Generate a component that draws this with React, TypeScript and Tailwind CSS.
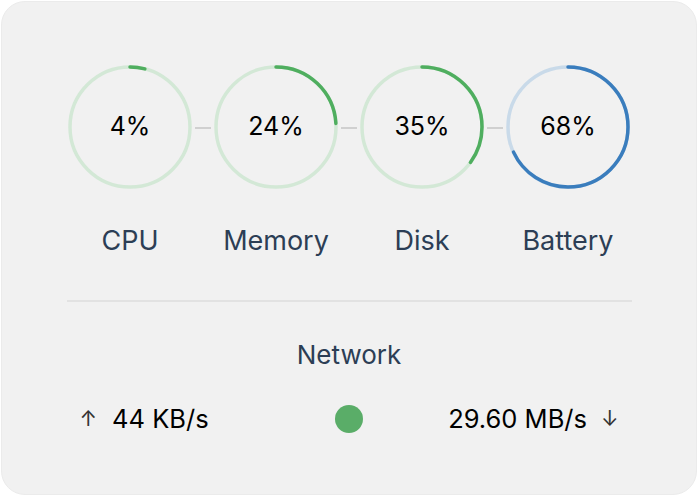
import React from "react";

type Gauge = { label: string; value: number; color: string; track: string };

const gauges: Gauge[] = [
  { label: "CPU", value: 4, color: "#4fae5f", track: "#d3e8d6" },
  { label: "Memory", value: 24, color: "#4fae5f", track: "#d3e8d6" },
  { label: "Disk", value: 35, color: "#4fae5f", track: "#d3e8d6" },
  { label: "Battery", value: 68, color: "#3a7dbd", track: "#c9dae9" },
];

function Ring({ g }: { g: Gauge }) {
  const r = 60;
  const c = 2 * Math.PI * r;
  return (
    <div className="relative w-[124px] h-[124px]">
      <svg width="124" height="124" viewBox="0 0 124 124" className="absolute inset-0">
        <circle cx="62" cy="62" r={r} fill="none" stroke={g.track} strokeWidth="3.5" />
        <circle
          cx="62"
          cy="62"
          r={r}
          fill="none"
          stroke={g.color}
          strokeWidth="3.5"
          strokeLinecap="round"
          strokeDasharray={`${(g.value / 100) * c} ${c}`}
          transform="rotate(-90 62 62)"
        />
      </svg>
      <div className="absolute inset-0 flex items-center justify-center text-[25px] text-black">
        {g.value}%
      </div>
    </div>
  );
}

export default function App() {
  return (
    <div className="w-[700px] h-[498px] bg-white p-px" style={{ fontFamily: "Inter, 'Noto Sans', sans-serif" }}>
      <div className="w-[696px] h-[494px] rounded-[24px] bg-[#f1f1f1] border border-[#ebebeb] flex flex-col items-center pt-[63px]">
        <div className="flex items-start">
          {gauges.map((g, i) => (
            <React.Fragment key={g.label}>
              {i > 0 && <div className="w-[16px] h-[2px] bg-[#d0d0d0] mt-[62px] mx-[3px]" />}
              <div className="flex flex-col items-center">
                <Ring g={g} />
                <div className="mt-[36px] text-[27px] leading-[32px] text-[#2c3e55] whitespace-nowrap w-[124px] text-center">
                  {g.label}
                </div>
              </div>
            </React.Fragment>
          ))}
        </div>
        <div className="w-[565px] h-[2px] bg-[#e2e2e2] mt-[43px]" />
        <div className="mt-[37px] text-[26px] leading-[32px] text-[#2c3e55]">Network</div>
        <div className="w-[565px] mt-[32px] h-[32px] flex items-center justify-between text-[25.5px] text-black px-[13px]">
          <div className="flex items-center gap-[15px] w-[200px]">
            <span className="text-[21px] text-[#333]">↑</span>
            <span>44 KB/s</span>
          </div>
          <div className="w-[28px] h-[28px] rounded-full bg-[#5aad68]" />
          <div className="flex items-center justify-end gap-[14px] w-[200px]">
            <span>29.60 MB/s</span>
            <span className="text-[21px] text-[#333]">↓</span>
          </div>
        </div>
      </div>
    </div>
  );
}
